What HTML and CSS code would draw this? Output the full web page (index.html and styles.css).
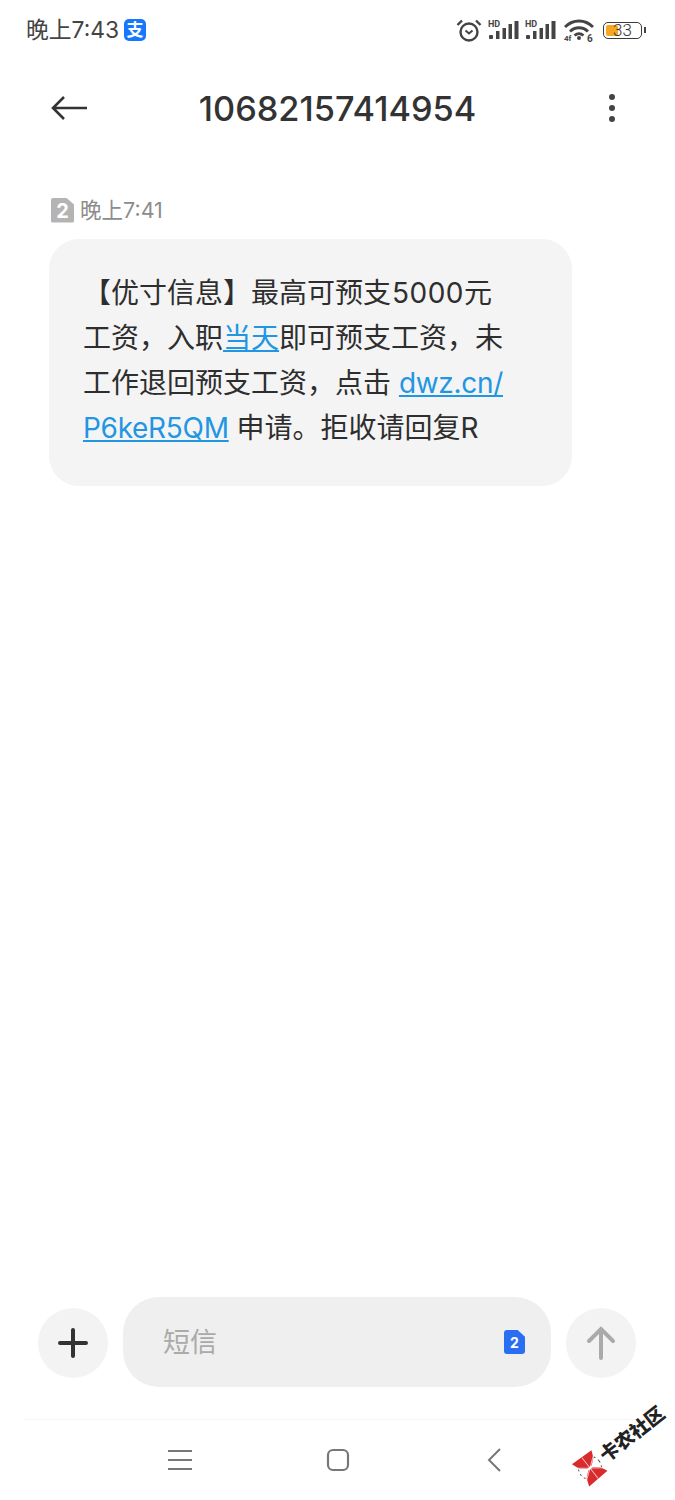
FILE: index.html
```html
<!DOCTYPE html>
<html lang="zh">
<head>
<meta charset="utf-8">
<title>10682157414954</title>
<link rel="stylesheet" href="styles.css">
</head>
<body>
<div class="phone">

  <div class="status">
    <div class="status-left">
      <span class="clock">晚上7:43</span>
      <span class="alipay">支</span>
    </div>
    <div class="status-right">
      <svg class="st-alarm" width="26" height="24" viewBox="0 0 26 24">
        <circle cx="13" cy="14" r="8.500" fill="none" stroke="#444" stroke-width="2.400"/>
        <path d="M9.500 12.500l3.500 3 3.500-3" fill="none" stroke="#444" stroke-width="2"/>
        <path d="M1.500 7l4.500-4.500M24.500 7L20 2.500" fill="none" stroke="#444" stroke-width="2.400"/>
      </svg>
      <svg class="st-signal" width="31" height="20" viewBox="0 0 31 20">
        <text x="0" y="7" class="hd">HD</text>
        <rect x="1" y="15" width="4" height="4" rx="1" fill="#444"/>
        <rect x="8" y="11" width="3.500" height="8" fill="#444"/>
        <rect x="14.500" y="8" width="3.500" height="11" fill="#444"/>
        <rect x="20.500" y="4" width="3.500" height="15" fill="#444"/>
        <rect x="26.500" y="1" width="4" height="18" fill="#444"/>
      </svg>
      <svg class="st-signal" width="31" height="20" viewBox="0 0 31 20">
        <text x="0" y="7" class="hd">HD</text>
        <rect x="1" y="15" width="4" height="4" rx="1" fill="#444"/>
        <rect x="8" y="11" width="3.500" height="8" fill="#444"/>
        <rect x="14.500" y="8" width="3.500" height="11" fill="#444"/>
        <rect x="20.500" y="4" width="3.500" height="15" fill="#444"/>
        <rect x="26.500" y="1" width="4" height="18" fill="#444"/>
      </svg>
      <svg class="st-wifi" width="30" height="24" viewBox="0 0 30 24">
        <path d="M1 9c8-8 20-8 28 0M6 13.500c5-5 13-5 18 0M10.500 17.500c3-2.500 6-2.500 9 0" fill="none" stroke="#444" stroke-width="2.800"/>
        <circle cx="15" cy="20" r="2" fill="#444"/>
        <text x="0" y="23" class="wifi-tag">4f</text>
        <text x="23" y="23.500" class="wifi-six">6</text>
      </svg>
      <div class="battery">
        <div class="battery-body"><span class="battery-fill"></span><span class="battery-num">33</span></div>
        <span class="battery-cap"></span>
      </div>
    </div>
  </div>

  <div class="topbar">
    <svg class="back" width="38" height="28" viewBox="0 0 38 28">
      <path d="M14 3L3 14l11 11M3 14h34" fill="none" stroke="#333" stroke-width="2.600"/>
    </svg>
    <div class="title">10682157414954</div>
    <div class="more"><i></i><i></i><i></i></div>
  </div>

  <div class="thread">
    <div class="msg-time">
      <span class="sim sim-grey">2</span>
      <span class="msg-clock">晚上7:41</span>
    </div>
    <div class="bubble">【优寸信息】最高可预支<span class="num">5000</span>元<br>工资，入职<a href="#">当天</a>即可预支工资，未<br>工作退回预支工资，点击 <a href="#" class="latin">dwz.cn/</a><br><a href="#" class="latin">P6keR5QM</a> 申请。拒收请回复R</div>
  </div>

  <div class="composer">
    <div class="round-btn">
      <svg width="30" height="30" viewBox="0 0 30 30"><path d="M15 2v26M2 15h26" stroke="#333" stroke-width="4" stroke-linecap="round"/></svg>
    </div>
    <div class="input">
      <span class="placeholder">短信</span>
      <span class="sim sim-blue">2</span>
    </div>
    <div class="round-btn">
      <svg width="30" height="34" viewBox="0 0 30 34"><path d="M3 15L15 3l12 12M15 4v28" fill="none" stroke="#aaa" stroke-width="4" stroke-linecap="round"/></svg>
    </div>
  </div>

  <div class="navbar">
    <svg width="24" height="22" viewBox="0 0 24 22"><path d="M0 2h24M0 11h24M0 20h24" stroke="#777" stroke-width="2.200"/></svg>
    <svg width="24" height="24" viewBox="0 0 24 24"><rect x="2" y="2" width="20" height="20" rx="5" fill="none" stroke="#777" stroke-width="2.200"/></svg>
    <svg class="nav-back" width="14" height="24" viewBox="0 0 14 24"><path d="M13 1L2 12l11 11" fill="none" stroke="#777" stroke-width="2"/></svg>
  </div>

  <div class="watermark">
    <svg width="30" height="30" viewBox="0 0 30 30">
      <circle cx="15" cy="15" r="11.500" fill="#fff" stroke="#555" stroke-width="1" stroke-dasharray="2 3"/>
      <path d="M3 1l24 1-3 7-6 5h-6L6 9zM3 29l24-1-3-7-6-5h-6l-6 5z" fill="#d92b2b"/>
      <path d="M15 2v26M3 6l24 18M27 6L3 24" stroke="#fff" stroke-width="1" fill="none" opacity=".7"/>
    </svg>
    <span>卡农社区</span>
  </div>

</div>
</body>
</html>
```

FILE: styles.css
```css
html, body {margin:0; padding:0; background:#fff;}
body {font-family:"Inter", "Noto Sans CJK SC", sans-serif; color:#333;}
.phone {position:relative; width:675px; height:1500px; display:flex; flex-direction:column; overflow:hidden;}

.status {height:60px; display:flex; justify-content:space-between; align-items:center; padding:0 29px 0 26px; flex:none;}
.status-left {display:flex; align-items:center; gap:5px;}
.clock {font-size:22.800px; color:#444; margin-bottom:3px;}
.alipay {width:22px; height:22px; border-radius:5px; background:#1677ff; color:#fff; font-size:17px; line-height:22px; text-align:center; font-weight:bold;}
.status-right {display:flex; align-items:center;}
.status-right svg {display:block;}
.st-alarm {margin-right:6px;}
.st-signal {margin-right:6px;}
.st-wifi {margin:0 9px 0 2px;}
.hd {font:bold 9px "Roboto", sans-serif; fill:#444;}
.wifi-tag {font:bold 8px "Roboto", sans-serif; fill:#444;}
.wifi-six {font:bold 10px "Roboto", sans-serif; fill:#444;}
.battery {display:flex; align-items:center; gap:2px;}
.battery-body {position:relative; width:37px; height:15px; border:1.500px solid #3a3a3a; border-radius:5px;}
.battery-fill {position:absolute; left:2px; top:2px; bottom:2px; width:12px; background:#f5a623; border-radius:2px;}
.battery-num {position:absolute; left:9px; top:0; font-family:"Roboto", sans-serif; font-size:17px; font-weight:300; line-height:15px; color:#333;}
.battery-cap {width:2px; height:6px; background:#444;}

.topbar {height:96px; display:grid; grid-template-columns:1fr auto 1fr; align-items:center; padding:0 59px; flex:none;}
.back {display:block; margin-left:-9px;}
.title {font-size:34.300px; font-weight:500; color:#333;}
.more {display:flex; flex-direction:column; gap:4.500px; justify-self:end; margin-right:1px;}
.more i {display:block; width:6.500px; height:6.500px; border-radius:50%; background:#444;}

.thread {flex:1; padding:41px 0 0 49px;}
.msg-time {display:flex; align-items:center; gap:6px; font-size:21.500px; color:#8c8c8c; height:26px; padding-left:2px;}
.msg-clock {margin-bottom:4px;}
.sim {display:inline-block; text-align:center; font-weight:bold; clip-path:polygon(0 0, 65% 0, 100% 28%, 100% 100%, 0 100%);}
.sim-grey {width:23px; height:25px; line-height:26px; background:#b4b4b4; color:#fff; font-size:20px; border-radius:2px;}
.bubble {width:422px; margin-top:16px; padding:32px 67px 35px 34px; background:#f4f4f4; border-radius:30px; font-size:28px; line-height:45px; color:#2e2e2e; white-space:nowrap;}
.bubble a {color:#2196e3;}
.bubble .latin {letter-spacing:-0.300px;}
.bubble .num {letter-spacing:0.500px; margin-left:1px;}

.composer {display:flex; align-items:center; padding:0 38px; gap:15px; height:90px; margin-top:1px; flex:none;}
.round-btn {width:70px; height:70px; margin-top:2px; border-radius:50%; background:#f3f3f3; display:flex; align-items:center; justify-content:center; flex:none;}
.input {width:428px; height:90px; box-sizing:border-box; padding:0 26px 0 40px; background:#efefef; border-radius:36px; display:flex; align-items:center; justify-content:space-between; flex:none;}
.placeholder {font-size:27px; color:#aaa; margin-bottom:3px;}
.sim-blue {width:21px; height:24px; line-height:25px; background:#2a6ff2; color:#fff; font-size:14px; border-radius:3px;}

.navbar {height:80px; margin:32px 24px 0; border-top:1px solid #f6f6f6; display:flex; justify-content:center; align-items:center; gap:134px; padding-right:6px; flex:none;}
.nav-back {margin-left:3px;}

/* watermark sits over the nav bar corner */
.watermark {position:absolute; left:575px; top:1453px; display:flex; align-items:center; gap:1px; transform:rotate(-38deg); transform-origin:15px 15px; white-space:nowrap; font-size:19px; line-height:30px; font-weight:900; color:#222;}
```
